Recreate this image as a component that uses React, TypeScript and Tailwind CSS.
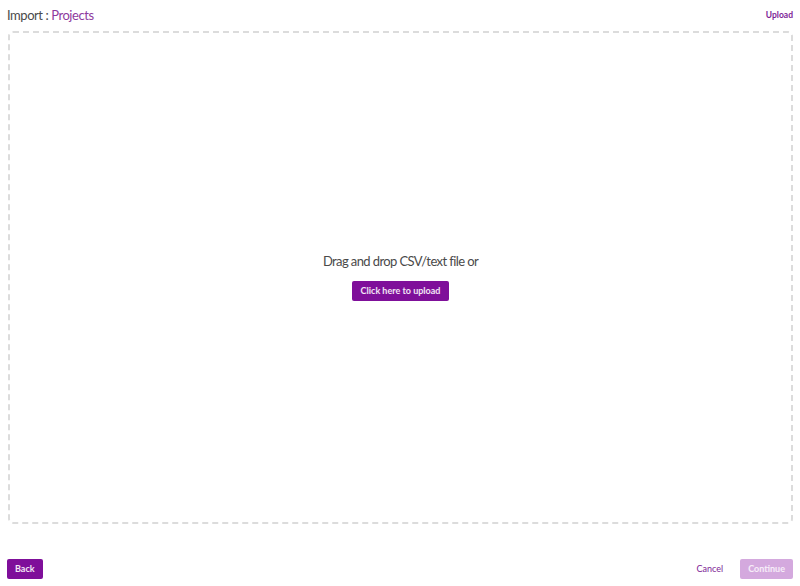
export default function App() {
  return (
    <div className="flex h-[586px] w-[800px] flex-col bg-white px-[7px] font-['Lato',sans-serif] text-[#4a4a4a]">
      {/* Header */}
      <div className="flex h-[31px] items-center justify-between">
        <h1 className="text-[13px] leading-none tracking-[-0.45px]">
          Import : <span className="text-[#8e3a9e]">Projects</span>
        </h1>
        <button className="text-[8.5px] font-bold text-[#7d1e96]">Upload</button>
      </div>

      {/* Drop zone */}
      <div className="ml-px flex h-[493px] flex-col items-center justify-center rounded-[5px] border-2 border-dashed border-[#dcdcdc]">
        <p className="text-[13px] leading-none tracking-[-0.6px]">Drag and drop CSV/text file or</p>
        <button className="mt-[13px] h-[20px] rounded-[2px] bg-[#7f0f9a] px-[9px] text-[9px] font-bold text-white/90">
          Click here to upload
        </button>
      </div>

      {/* Footer */}
      <div className="mt-[35px] flex items-center justify-between">
        <button className="h-[20px] rounded-[2px] bg-[#7f0f9a] px-[8px] text-[9px] font-bold text-white/90">
          Back
        </button>
        <div className="flex items-center gap-[17px]">
          <button className="text-[9px] text-[#7d1e96]">Cancel</button>
          <button className="h-[20px] rounded-[2px] bg-[#d4a9de] px-[8px] text-[9px] font-bold text-white/80">
            Continue
          </button>
        </div>
      </div>
    </div>
  );
}
